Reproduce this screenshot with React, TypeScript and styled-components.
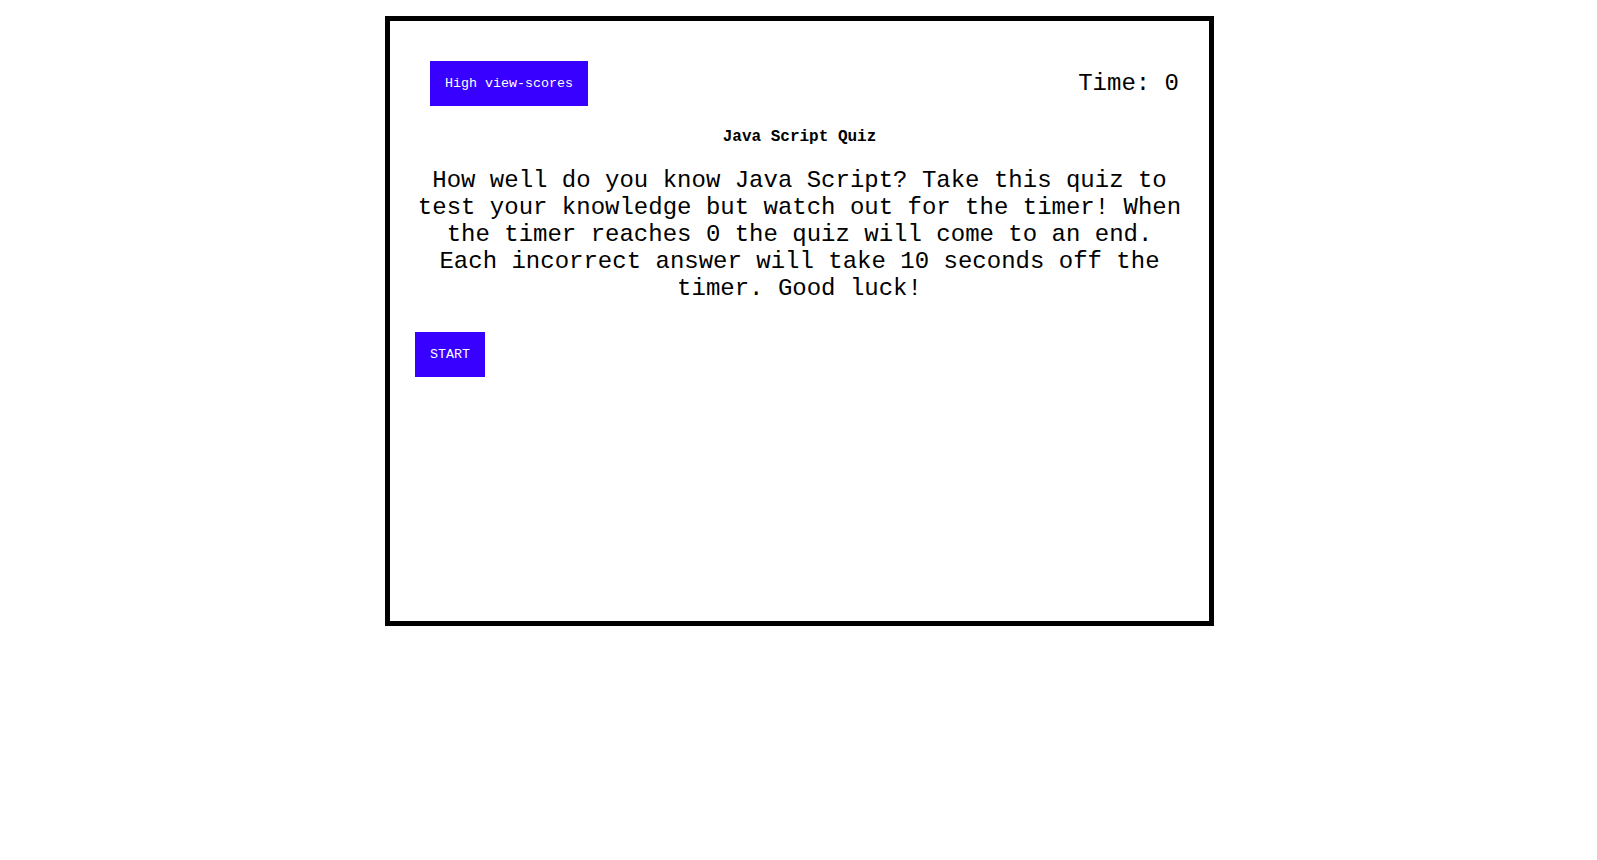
import React from "react";
import styled, { createGlobalStyle } from "styled-components";

const GlobalStyle = createGlobalStyle`
  html, body {
    margin: 0;
    padding: 0;
    background: #ffffff;
  }
  body {
    font-family: "Courier New", "Liberation Mono", monospace;
    color: #000000;
  }
`;

const QuizBox = styled.main`
  box-sizing: content-box;
  width: 819px;
  height: 600px;
  margin: 16px 0 0 calc(50% - 413.5px);
  border: 5px solid #000000;
  display: flex;
  flex-direction: column;
  align-items: stretch;
`;

const Header = styled.header`
  display: flex;
  justify-content: space-between;
  align-items: center;
  padding: 40px 30px 0 40px;
`;

const ActionButton = styled.button<{ $indent?: number }>`
  align-self: flex-start;
  margin: 0 0 0 ${(p) => p.$indent ?? 0}px;
  padding: 15px;
  border: none;
  background: #3700ff;
  color: #ffffff;
  font-family: "Courier New", "Liberation Mono", monospace;
  font-size: 13.333px;
  line-height: 15px;
  cursor: pointer;
`;

const StartButton = styled(ActionButton)`
  margin-top: 30px;
`;

const Timer = styled.span`
  font-family: "Courier New", "Liberation Mono", monospace;
  font-size: 24px;
  line-height: normal;
  color: #000000;
`;

const Title = styled.h1`
  margin: 22px 0 0;
  font-family: "Courier New", "Liberation Mono", monospace;
  font-size: 16px;
  font-weight: bold;
  line-height: normal;
  text-align: center;
`;

const Intro = styled.p`
  margin: 21px 0 0;
  padding: 0 25px;
  font-family: "Courier New", "Liberation Mono", monospace;
  font-size: 24px;
  line-height: normal;
  text-align: center;
  color: #000000;
`;

export default function App() {
  return (
    <>
      <GlobalStyle />
      <QuizBox>
        <Header>
          <ActionButton>High view-scores</ActionButton>
          <Timer>Time: 0</Timer>
        </Header>
        <Title>Java Script Quiz</Title>
        <Intro>
          How well do you know Java Script? Take this quiz to test your knowledge
          but watch out for the timer! When the timer reaches 0 the quiz will
          come to an end. Each incorrect answer will take 10 seconds off the
          timer. Good luck!
        </Intro>
        <StartButton $indent={25}>START</StartButton>
      </QuizBox>
    </>
  );
}
